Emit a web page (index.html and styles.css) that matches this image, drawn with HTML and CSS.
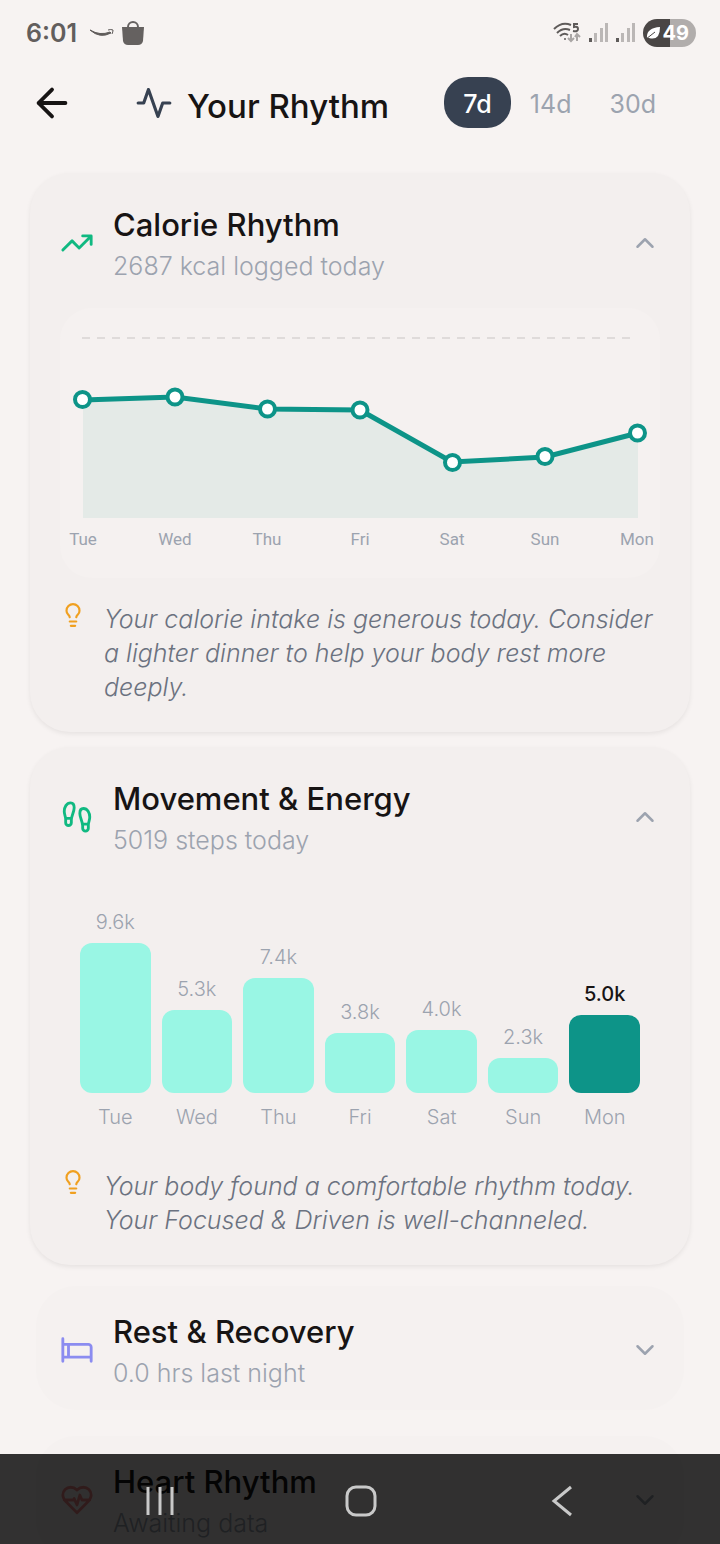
FILE: index.html
```html
<!DOCTYPE html>
<html lang="en">
<head>
  <meta charset="UTF-8" />
  <meta name="viewport" content="width=device-width, initial-scale=1.0"/>
  <title>Your Rhythm</title>
  <link rel="stylesheet" href="styles.css">
</head>
<body>

  <div class="screen">
    <div class="status">
      <span class="clock">6:01</span>
      <svg class="smile" width="26" height="12" viewBox="0 0 26 12"><path d="M1 3q10 6 20 2l1 1Q11 12 1 3z" fill="#5f5b5a" stroke="#5f5b5a" stroke-width="1"/><path d="M19 3q3-1 5 0 0 2-1 4" fill="none" stroke="#5f5b5a" stroke-width="1"/></svg>
      <svg class="bag" width="22" height="24" viewBox="0 0 22 24"><path d="M0 6h22l-1 14q-1 4-5 4H6q-4 0-5-4z" fill="#656160"/><path d="M6 8V6a5 5 0 0 1 10 0v2" fill="none" stroke="#656160" stroke-width="2"/></svg>
      <div class="status-right">
        <svg width="28" height="22" viewBox="0 0 28 22" fill="none" stroke="#5f5b5a" stroke-width="2">
          <path d="M1 7Q9-1 18 3M4 11q6-6 13-3M7 14q4-4 8-1"/>
          <circle cx="12" cy="17" r="1" fill="#5f5b5a" stroke="none"/>
          <path d="M25 2h-4v3q4-1 4 2t-5 2"/>
          <path d="M18 12v7m-3-3 3 3 3-3M24 19v-7m-2 3 2-3 3 3" stroke="#aaa6a5"/>
        </svg>
        <svg width="19" height="20" viewBox="0 0 19 20"><path d="M0 15h3v4H0z" fill="#5f5b5a"/><path d="M5 10h3v9H5zM11 5h3v14h-3zM16 0h3v19h-3z" fill="#bbb7b6"/></svg>
        <svg width="19" height="20" viewBox="0 0 19 20"><path d="M0 15h3v4H0z" fill="#5f5b5a"/><path d="M5 10h3v9H5zM11 5h3v14h-3zM16 0h3v19h-3z" fill="#bbb7b6"/></svg>
        <div class="battery">
          <svg width="15" height="14" viewBox="0 0 15 14"><path d="M1 12q-1-10 13-11 0 14-11 11" fill="#fff"/><path d="m0 13 9-7" stroke="#4a4645" stroke-width="1"/></svg>
          <span>49</span>
        </div>
      </div>
    </div>

    <header class="topbar">
      <button class="back" aria-label="Back">
        <svg class="icon" width="46" height="46" viewBox="0 0 24 24"><path d="m12 19-7-7 7-7M19 12H5"/></svg>
      </button>
      <svg class="icon pulse" width="38" height="38" viewBox="0 0 24 24"><path d="M22 12h-4.500l-3 8.500-6-17L5.500 12H2"/></svg>
      <h1>Your Rhythm</h1>
      <div class="ranges">
        <button class="range active">7d</button>
        <button class="range">14d</button>
        <button class="range">30d</button>
      </div>
    </header>

    <main class="feed">

      <section class="card">
        <div class="card-head">
          <svg class="icon green" width="34" height="34" viewBox="0 0 24 24"><path d="m22 7-8.500 8.500-5-5L2 17M16 7h6v6"/></svg>
          <div class="titles">
            <h2>Calorie Rhythm</h2>
            <p>2687 kcal logged today</p>
          </div>
          <button class="toggle" aria-label="Collapse Calorie Rhythm">
            <svg class="icon" width="30" height="30" viewBox="0 0 24 24"><path d="m18 15-6-6-6 6"/></svg>
          </button>
        </div>
        <div class="panel">
          <svg class="line-chart" viewBox="0 0 600 270">
            <path class="goal" d="M22 30H574"/>
            <path class="area" d="M23 92 115 89 207 101 300 102 392 154 485 149 578 125V210H23z"/>
            <path class="line" d="M23 92 115 89 207 101 300 102 392 154 485 149 578 125"/>
            <g class="dots">
              <circle cx="22.500" cy="91.500" r="7.500"/>
              <circle cx="115" cy="89" r="7.500"/>
              <circle cx="207.500" cy="101" r="7.500"/>
              <circle cx="300" cy="102" r="7.500"/>
              <circle cx="392.500" cy="154.500" r="7.500"/>
              <circle cx="485" cy="148.500" r="7.500"/>
              <circle cx="577.500" cy="125" r="7.500"/>
            </g>
            <g class="days">
              <text x="23" y="237">Tue</text>
              <text x="115" y="237">Wed</text>
              <text x="207" y="237">Thu</text>
              <text x="300" y="237">Fri</text>
              <text x="392" y="237">Sat</text>
              <text x="485" y="237">Sun</text>
              <text x="577" y="237">Mon</text>
            </g>
          </svg>
        </div>
        <div class="insight">
          <svg class="icon" width="26" height="26" viewBox="0 0 24 24"><path d="M15 14c.2-1 .7-1.700 1.500-2.500 1-.9 1.500-2.200 1.500-3.500A6 6 0 0 0 6 8c0 1 .2 2.200 1.500 3.500.7.7 1.300 1.500 1.500 2.500M9 18h6M10 22h4"/></svg>
          <p>Your calorie intake is generous today. Consider a lighter dinner to help your body rest more deeply.</p>
        </div>
      </section>

      <section class="card">
        <div class="card-head">
          <svg class="icon green" width="34" height="34" viewBox="0 0 24 24"><path d="M4 16v-2.380C4 11.500 2.970 10.500 3 8c.03-2.720 1.490-6 4.500-6C9.370 2 10 3.800 10 5.500c0 3.110-2 5.660-2 8.680V16a2 2 0 1 1-4 0ZM20 20v-2.380c0-2.120 1.030-3.120 1-5.620-.03-2.720-1.490-6-4.500-6C14.630 6 14 7.800 14 9.500c0 3.110 2 5.660 2 8.680V20a2 2 0 1 0 4 0ZM16 17h4M4 13h4"/></svg>
          <div class="titles">
            <h2>Movement &amp; Energy</h2>
            <p>5019 steps today</p>
          </div>
          <button class="toggle" aria-label="Collapse Movement and Energy">
            <svg class="icon" width="30" height="30" viewBox="0 0 24 24"><path d="m18 15-6-6-6 6"/></svg>
          </button>
        </div>
        <div class="bars">
          <div class="col"><span>9.6k</span><div class="bar" style="height: 150px"></div><span>Tue</span></div>
          <div class="col"><span>5.3k</span><div class="bar" style="height: 83px"></div><span>Wed</span></div>
          <div class="col"><span>7.4k</span><div class="bar" style="height: 115px"></div><span>Thu</span></div>
          <div class="col"><span>3.8k</span><div class="bar" style="height: 60px"></div><span>Fri</span></div>
          <div class="col"><span>4.0k</span><div class="bar" style="height: 63px"></div><span>Sat</span></div>
          <div class="col"><span>2.3k</span><div class="bar" style="height: 35px"></div><span>Sun</span></div>
          <div class="col today"><span class="value">5.0k</span><div class="bar" style="height: 78px"></div><span>Mon</span></div>
        </div>
        <div class="insight">
          <svg class="icon" width="26" height="26" viewBox="0 0 24 24"><path d="M15 14c.2-1 .7-1.700 1.500-2.500 1-.9 1.500-2.200 1.500-3.500A6 6 0 0 0 6 8c0 1 .2 2.200 1.500 3.500.7.7 1.300 1.500 1.500 2.500M9 18h6M10 22h4"/></svg>
          <p>Your body found a comfortable rhythm today. Your Focused &amp; Driven is well-channeled.</p>
        </div>
      </section>

      <section class="card collapsed">
        <div class="card-head">
          <svg class="icon violet" width="34" height="34" viewBox="0 0 24 24"><path d="M2 4v16M2 8h18a2 2 0 0 1 2 2v10M2 17h20M6 8v9"/></svg>
          <div class="titles">
            <h2>Rest &amp; Recovery</h2>
            <p>0.0 hrs last night</p>
          </div>
          <button class="toggle" aria-label="Expand Rest and Recovery">
            <svg class="icon" width="30" height="30" viewBox="0 0 24 24"><path d="m6 9 6 6 6-6"/></svg>
          </button>
        </div>
      </section>

      <section class="card collapsed">
        <div class="card-head">
          <svg class="icon red" width="34" height="34" viewBox="0 0 24 24"><path d="M19 14c1.490-1.460 3-3.210 3-5.500A5.500 5.500 0 0 0 16.500 3c-1.760 0-3 .5-4.500 2-1.500-1.500-2.740-2-4.500-2A5.500 5.500 0 0 0 2 8.500c0 2.300 1.500 4.050 3 5.500l7 7ZM3 12h6.500l.5-1 2 4.500 2-7 1.500 3.500H21"/></svg>
          <div class="titles">
            <h2>Heart Rhythm</h2>
            <p>Awaiting data</p>
          </div>
          <button class="toggle" aria-label="Expand Heart Rhythm">
            <svg class="icon" width="30" height="30" viewBox="0 0 24 24"><path d="m6 9 6 6 6-6"/></svg>
          </button>
        </div>
      </section>

    </main>

    <nav class="navbar">
      <button aria-label="Recent apps">
        <svg width="32" height="32" viewBox="0 0 32 32"><path d="M4 2v28M16 2v28M28 2v28"/></svg>
      </button>
      <button aria-label="Home">
        <svg width="32" height="32" viewBox="0 0 32 32"><rect x="2" y="2" width="28" height="28" rx="9"/></svg>
      </button>
      <button aria-label="Go back">
        <svg width="32" height="32" viewBox="0 0 32 32"><path d="M25 2 8 16l17 14"/></svg>
      </button>
    </nav>
  </div>

</body>
</html>
```

FILE: styles.css
```css
* {
  box-sizing: border-box;
}

body {
  margin: 0;
  font-family: Inter, "Liberation Sans", sans-serif;
  background: #f7f3f2;
  color: #171414;
}

h1, h2, p {
  margin: 0;
}

button {
  padding: 0;
  border: 0;
  background: none;
  font: inherit;
  color: inherit;
}

svg {
  display: block;
  flex-shrink: 0;
}

.icon {
  fill: none;
  stroke: currentColor;
  stroke-width: 2;
  stroke-linecap: round;
  stroke-linejoin: round;
}

.screen {
  display: flex;
  flex-direction: column;
  height: 100vh;
}

/* status bar */
.status {
  display: flex;
  align-items: center;
  height: 66px;
  padding: 0 24px 0 26px;
}

.clock {
  font-size: 25px;
  font-weight: 600;
  color: #625e5d;
}

.smile {
  margin-left: 12px;
}

.bag {
  margin-left: 7px;
}

.status-right {
  display: flex;
  align-items: center;
  gap: 8px;
  margin-left: auto;
}

.battery {
  display: flex;
  align-items: center;
  gap: 1px;
  height: 28px;
  padding: 0 7px 0 3px;
  border-radius: 14px;
  background: linear-gradient(to right, #4a4645 50%, #b1adac 50%);
  color: #fff;
  font-size: 20px;
  font-weight: 700;
}

/* top bar */
.topbar {
  display: flex;
  align-items: center;
  padding: 11px 45px 35px 29px;
}

.pulse {
  margin-left: 60px;
  color: #374151;
}

h1 {
  margin-left: 14px;
  padding-top: 6px;
  font-size: 33px;
  font-weight: 500;
}

.ranges {
  display: flex;
  margin-left: auto;
}

.range {
  height: 51px;
  padding: 2px 19px 0;
  border-radius: 24px;
  font-size: 25px;
  color: #9ca3af;
}

.range.active {
  background: #374151;
  color: #fff;
  font-weight: 500;
}

/* cards */
.feed {
  display: flex;
  flex-direction: column;
  gap: 15px;
  flex: 1;
  min-height: 0;
  padding: 10px 30px 0;
  overflow-y: auto;
  scrollbar-width: none;
}

.card {
  display: flex;
  flex-direction: column;
  flex-shrink: 0;
  gap: 24px;
  padding: 28px 30px;
  border-radius: 40px;
  background: #f3efee;
  box-shadow: 0 2px 5px rgba(0, 0, 0, 0.07);
}

.card.collapsed {
  margin: 6px 6px 5px;
  padding: 22px 24px 19px;
  background: #f5f1f0;
  box-shadow: none;
}

.card-head {
  display: flex;
  align-items: center;
  gap: 19px;
}

.titles {
  flex: 1;
}

h2 {
  font-size: 31px;
  line-height: 47px;
  font-weight: 500;
}

.titles p {
  font-size: 25px;
  line-height: 36px;
  font-weight: 300;
  color: #9ca3af;
}

.toggle {
  color: #9ca3af;
}

.green { color: #10b981; }
.violet { color: #8b8cf0; }
.red { color: #ef4444; }

/* not readable yet, so the icon stays faded */
.red {
  opacity: 0.6;
}

.insight {
  display: flex;
  gap: 18px;
  color: #f0a020;
}

.insight p {
  font-size: 25px;
  line-height: 34px;
  font-weight: 300;
  font-style: italic;
  color: #6b7280;
}

/* calorie chart */
.panel {
  border-radius: 32px;
  background: #f5f1f0;
}

.line-chart {
  width: 100%;
}

.goal {
  stroke: #dfdbda;
  stroke-width: 2;
  stroke-dasharray: 8 7;
}

.area {
  fill: #e4eae7;
}

.line {
  fill: none;
  stroke: #0d9488;
  stroke-width: 5;
}

.dots {
  fill: #fff;
  stroke: #0d9488;
  stroke-width: 4;
}

.days {
  fill: #9ca3af;
  font-family: Roboto, sans-serif;
  font-size: 17px;
  text-anchor: middle;
}

/* steps chart */
.bars {
  display: grid;
  grid-template-columns: repeat(7, 1fr);
  align-items: end;
  gap: 11px;
  padding: 28px 20px 16px;
}

.col {
  font-size: 20px;
  line-height: 24px;
  font-weight: 300;
  text-align: center;
  color: #9ca3af;
}

.col span {
  display: block;
}

.bar {
  margin: 9px 0 12px;
  border-radius: 12px;
  background: #99f6e4;
}

.today .bar {
  background: #0d9488;
}

.value {
  font-weight: 500;
  color: #171414;
}

/* system navigation */
.navbar {
  position: fixed;
  right: 0;
  bottom: 0;
  left: 0;
  display: grid;
  grid-template-columns: repeat(3, 1fr);
  height: 90px;
  padding: 3px 58px 0 60px;
  background: rgba(0, 0, 0, 0.8);
}

.navbar button {
  display: flex;
  align-items: center;
  justify-content: center;
}

.navbar svg {
  fill: none;
  stroke: #c9c9c9;
  stroke-width: 3;
}
```
